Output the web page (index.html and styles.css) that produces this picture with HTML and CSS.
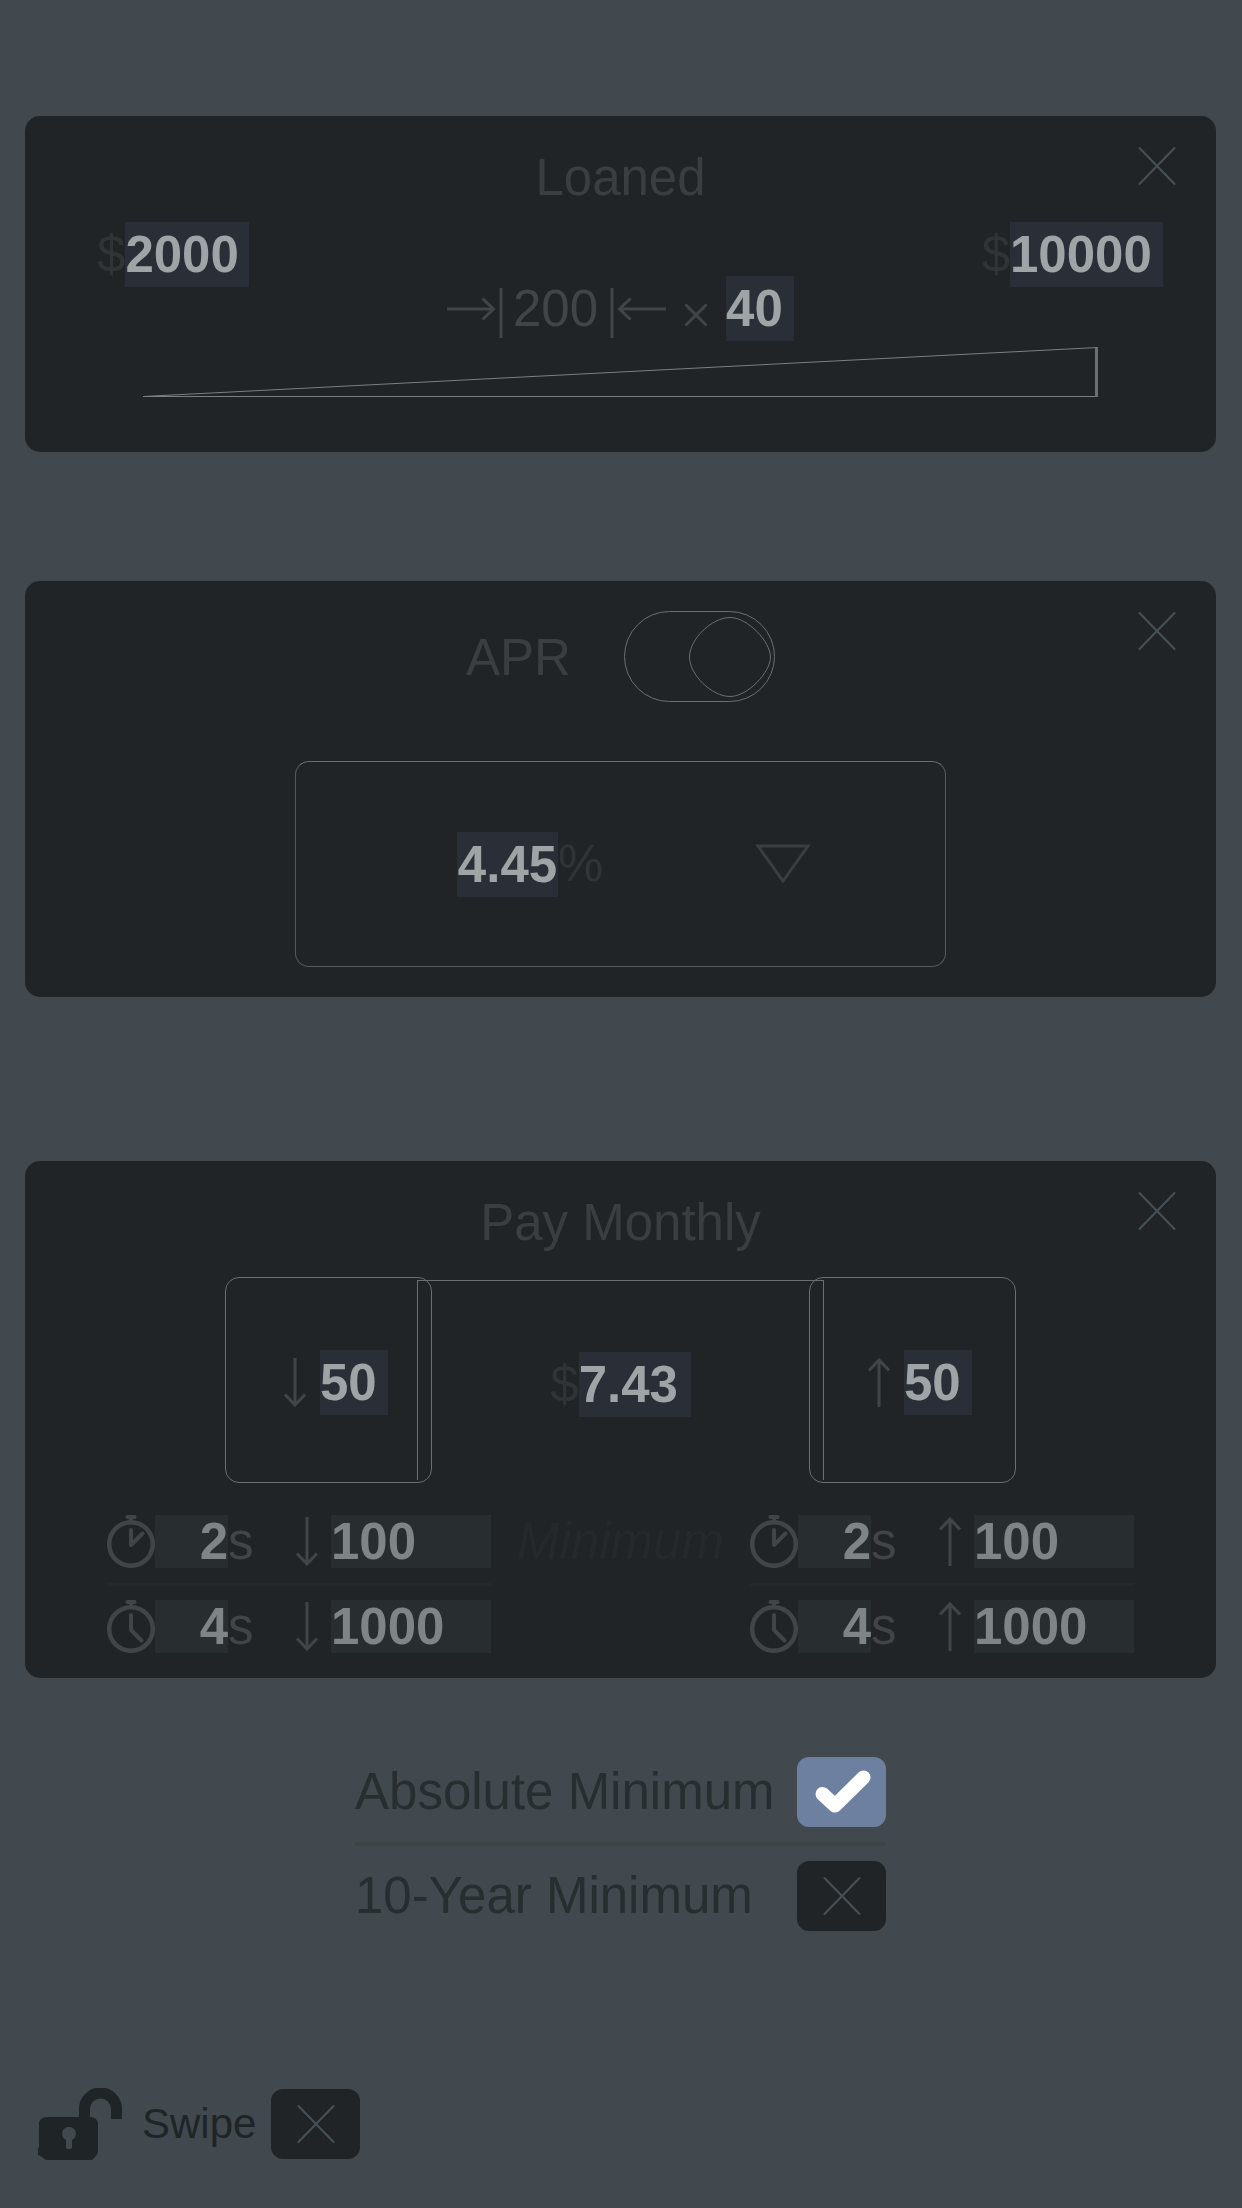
FILE: index.html
```html
<!DOCTYPE html>
<html lang="en">
<head>
<meta charset="utf-8">
<meta name="viewport" content="width=device-width, initial-scale=1">
<title>Loan settings</title>
<link rel="stylesheet" href="styles.css">
</head>
<body>
<svg class="sprite" aria-hidden="true">
  <symbol id="cross" viewBox="0 0 38 40"><path d="M1.500 2L36.500 38M36.500 2L1.500 38"/></symbol>
  <symbol id="down" viewBox="0 0 22 49"><path d="M11 0V47M1 36.500L11 47L21 36.500"/></symbol>
  <symbol id="up" viewBox="0 0 22 49"><path d="M11 49V2M1 12.500L11 2L21 12.500"/></symbol>
  <symbol id="watch" viewBox="0 0 48 53"><circle cx="24" cy="29" r="21.800" stroke-width="4.500"/><path d="M20.500 2H27.500M24 2V7" stroke-width="4"/></symbol>
</svg>
<main class="page">

  <section class="card card-loaned">
    <header class="card-head">
      <h2 class="title">Loaned</h2>
      <button class="close" type="button" aria-label="Remove Loaned"><svg class="icon cross"><use href="#cross"/></svg></button>
    </header>
    <div class="range">
      <label class="field range-min"><span class="unit">$</span><input class="value w-thousands" type="text" value="2000" aria-label="Lowest loan"></label>
      <div class="step">
        <svg class="stop" viewBox="0 0 56 64"><path d="M0 32H46M35.500 21.500L46.500 32L35.500 42.500M54 11V61"/></svg>
        <span class="step-size">200</span>
        <svg class="stop" viewBox="0 0 56 64"><path d="M56 32H10M20.500 21.500L9.500 32L20.500 42.500M2 11V61"/></svg>
        <svg class="times" viewBox="0 0 24 64"><path d="M1.500 27.500L22.500 48.500M22.500 27.500L1.500 48.500"/></svg>
        <input class="value w-tens" type="text" value="40" aria-label="Number of steps">
      </div>
      <label class="field range-max"><span class="unit">$</span><input class="value w-ten-thousands" type="text" value="10000" aria-label="Highest loan"></label>
    </div>
    <svg class="wedge" viewBox="0 0 955 50" preserveAspectRatio="none"><path d="M0 49.500L954.500 .5V49.500Z"/><path class="wedge-edge" d="M953.500 1V50"/></svg>
  </section>

  <section class="card card-apr">
    <header class="card-head">
      <div class="apr-head">
        <label class="title" for="apr">APR</label>
        <span class="switch">
          <input class="switch-input" id="apr" type="checkbox" role="switch" checked>
          <svg class="knob" viewBox="0 0 82 80"><path d="M41 .5C59 .5 81.500 25 81.500 40C81.500 55 59 79.500 41 79.500C23 79.500 .5 58 .5 40C.5 22 23 .5 41 .5Z"/></svg>
        </span>
      </div>
      <button class="close" type="button" aria-label="Remove APR"><svg class="icon cross"><use href="#cross"/></svg></button>
    </header>
    <div class="rate">
      <label class="field"><input class="value w-rate" type="text" value="4.45" aria-label="Rate"><span class="unit">%</span></label>
      <button class="open" type="button" aria-label="Show rates"><svg class="open-icon" viewBox="0 0 56 40"><path d="M3 2H53L28 37Z"/></svg></button>
    </div>
  </section>

  <section class="card card-pay">
    <header class="card-head">
      <h2 class="title">Pay Monthly</h2>
      <button class="close" type="button" aria-label="Remove Pay Monthly"><svg class="icon cross"><use href="#cross"/></svg></button>
    </header>
    <div class="stepper">
      <label class="side"><svg class="icon arrow"><use href="#down"/></svg><input class="value w-tens" type="text" value="50" aria-label="Decrease by"></label>
      <label class="middle"><span class="unit">$</span><input class="value w-payment" type="text" value="7.43" aria-label="Monthly payment"></label>
      <label class="side"><svg class="icon arrow"><use href="#up"/></svg><input class="value w-tens" type="text" value="50" aria-label="Increase by"></label>
    </div>
    <div class="holds">
      <div class="hold-group">
        <div class="hold">
          <svg class="watch" viewBox="0 0 48 53"><use href="#watch"/><path d="M24 15V30L35.500 18.500"/></svg>
          <input class="muted seconds" type="text" value="2" aria-label="First hold, seconds"><span class="sec">s</span>
          <svg class="icon arrow"><use href="#down"/></svg>
          <input class="muted" type="text" value="100" aria-label="Decrease after first hold">
        </div>
        <div class="hold">
          <svg class="watch" viewBox="0 0 48 53"><use href="#watch"/><path d="M24 15V30L34.500 40.500"/></svg>
          <input class="muted seconds" type="text" value="4" aria-label="Second hold, seconds"><span class="sec">s</span>
          <svg class="icon arrow"><use href="#down"/></svg>
          <input class="muted" type="text" value="1000" aria-label="Decrease after second hold">
        </div>
      </div>
      <em class="minimum">Minimum</em>
      <div class="hold-group">
        <div class="hold">
          <svg class="watch" viewBox="0 0 48 53"><use href="#watch"/><path d="M24 15V30L35.500 18.500"/></svg>
          <input class="muted seconds" type="text" value="2" aria-label="First hold, seconds"><span class="sec">s</span>
          <svg class="icon arrow"><use href="#up"/></svg>
          <input class="muted" type="text" value="100" aria-label="Increase after first hold">
        </div>
        <div class="hold">
          <svg class="watch" viewBox="0 0 48 53"><use href="#watch"/><path d="M24 15V30L34.500 40.500"/></svg>
          <input class="muted seconds" type="text" value="4" aria-label="Second hold, seconds"><span class="sec">s</span>
          <svg class="icon arrow"><use href="#up"/></svg>
          <input class="muted" type="text" value="1000" aria-label="Increase after second hold">
        </div>
      </div>
    </div>
  </section>

  <section class="options">
    <label class="option">Absolute Minimum
      <span class="tick">
        <input class="tick-input" type="checkbox" checked>
        <svg class="tick-on" viewBox="0 0 89 70"><path d="M25.500 37L38 48.500L66.500 20.500"/></svg>
        <svg class="icon cross tick-off"><use href="#cross"/></svg>
      </span>
    </label>
    <label class="option">10-Year Minimum
      <span class="tick">
        <input class="tick-input" type="checkbox">
        <svg class="tick-on" viewBox="0 0 89 70"><path d="M25.500 37L38 48.500L66.500 20.500"/></svg>
        <svg class="icon cross tick-off"><use href="#cross"/></svg>
      </span>
    </label>
  </section>

  <footer class="footer">
    <svg class="lock" viewBox="0 0 84 72">
      <path class="shackle" d="M46.500 31V21A16 16 0 0 1 78.500 21V31"/>
      <path class="body" fill-rule="evenodd" d="M9 29H52Q60 29 60 37V63Q60 67 54 72H8Q1 67 0 67V60L1 59V37Q1 29 9 29ZM28 52V59Q28 61 31 61Q34 61 34 59V52A7 7 0 1 0 28 52Z"/>
    </svg>
    <label class="swipe">Swipe
      <span class="tick">
        <input class="tick-input" type="checkbox">
        <svg class="tick-on" viewBox="0 0 89 70"><path d="M25.500 37L38 48.500L66.500 20.500"/></svg>
        <svg class="icon cross tick-off"><use href="#cross"/></svg>
      </span>
    </label>
  </footer>
</main>
</body>
</html>
```
FILE: styles.css
```css
:root {
  --page: #41494e;
  --card: #202426;
  --line: #6b6f73;
  --title: #3a3e40;
  --glyph: #414547;
  --unit: #2f3436;
  --field: #2a2e36;
  --value: #9fa4a7;
}

* { box-sizing: border-box; }

body {
  margin: 0;
  background: var(--page);
  font: 51px/60px "Liberation Sans", Arial, sans-serif;
  color: var(--title);
}

input, button {
  margin: 0;
  padding: 0;
  border: 0;
  border-radius: 0;
  background: none;
  font: inherit;
  color: inherit;
}

svg { display: block; fill: none; }

.sprite { position: absolute; width: 0; height: 0; }

.page {
  display: flex;
  flex-direction: column;
  min-height: 100vh;
  padding: 116px 26px 48px 25px;
}

.card {
  display: flex;
  flex-direction: column;
  padding-top: 30px;
  border-radius: 15px;
  background: var(--card);
}

.card-loaned { padding-bottom: 55px; }
.card-apr { margin-top: 129px; padding-bottom: 30px; }
.card-pay { margin-top: 164px; padding-bottom: 25px; }

.card-head {
  display: grid;
  grid-template-columns: 1fr auto 1fr;
  align-items: start;
  padding: 0 40px;
}

.card-head > :first-child { grid-column: 2; }

.title { margin: 0; padding-top: 2px; font-size: 51px; font-weight: 400; }

.close { justify-self: end; }

.icon { stroke: var(--glyph); stroke-width: 3; }

.cross {
  width: 38px;
  height: 40px;
  stroke: #465157;
  stroke-width: 2;
  stroke-linecap: round;
}

.arrow { width: 22px; height: 49px; }

.field, .middle { display: flex; align-items: center; }

.unit { color: var(--unit); }

.value {
  height: 65px;
  background: var(--field);
  font-weight: 700;
  color: var(--value);
}

.w-tens { width: 68px; }
.w-rate { width: 101px; text-align: center; }
.w-payment { width: 112px; }
.w-thousands { width: 124px; }
.w-ten-thousands { width: 153px; }

/* Loan range */

.range {
  display: grid;
  grid-template-columns: 1fr auto 1fr;
  align-items: start;
  padding: 14px 53px 0;
}

.range-min { margin-left: 19px; }
.range-max { justify-self: end; }

.step { display: flex; align-items: center; padding-top: 54px; color: var(--glyph); }
.stop { width: 56px; height: 64px; stroke: var(--glyph); stroke-width: 3; }
.step-size { margin: 0 12px 0 10px; }
.times { width: 24px; height: 64px; margin: 0 18px; stroke: var(--glyph); stroke-width: 3; }

.wedge {
  align-self: center;
  width: calc(100% - 236px);
  height: 50px;
  margin-top: 6px;
  stroke: #7b7f81;
  stroke-width: 1;
}

.wedge-edge { stroke-width: 3; stroke: #6b6f71; }

/* APR */

.apr-head { display: flex; align-items: center; gap: 53px; }

.switch { display: grid; align-items: center; }
.switch-input, .knob { grid-area: 1 / 1; }

.switch-input {
  appearance: none;
  width: 151px;
  height: 91px;
  border: 1px solid var(--line);
  border-radius: 46px;
}

.knob {
  width: 82px;
  height: 80px;
  margin: 0 4px;
  stroke: var(--line);
  stroke-width: 1;
  pointer-events: none;
}

.switch-input:checked + .knob { justify-self: end; }

.rate {
  display: flex;
  align-items: center;
  justify-content: space-between;
  align-self: center;
  width: 651px;
  max-width: 100%;
  min-height: 206px;
  margin-top: 59px;
  padding: 0 134px 0 161px;
  border: 1px solid #55595d;
  border-top-color: var(--line);
  border-radius: 14px;
}

.open-icon { width: 56px; height: 40px; stroke: var(--title); stroke-width: 3; }

/* Monthly payment */

.stepper {
  display: flex;
  align-self: center;
  width: 791px;
  max-width: 100%;
  margin-top: 24px;
}

.side, .middle {
  display: flex;
  align-items: center;
  align-self: flex-start;
  border: 1px solid var(--line);
}

.side {
  gap: 14px;
  width: 207px;
  height: 206px;
  padding: 4px 0 0 58px;
  border-radius: 14px;
}

.middle {
  flex: 1;
  justify-content: center;
  height: 200px;
  margin: 3px -15px 0;
  padding-top: 8px;
  border-bottom: 0;
}

.holds {
  display: flex;
  align-items: flex-start;
  justify-content: space-between;
  margin-top: 32px;
  padding: 0 82px;
  line-height: 53px;
}

.hold {
  display: grid;
  grid-template-columns: 48px 73px 68px 35px 160px;
  align-items: center;
}

.hold:first-child { padding-bottom: 15px; border-bottom: 3px solid #24282a; }
.hold:last-child { padding-top: 14px; }

.watch {
  width: 48px;
  height: 53px;
  stroke: var(--glyph);
  stroke-width: 4;
  stroke-linecap: round;
  stroke-linejoin: round;
}

.muted {
  width: 100%;
  height: 53px;
  background: #282d30;
  font-weight: 700;
  color: #7f8486;
}

.seconds { text-align: right; }
.sec { color: var(--glyph); }
.minimum { color: #25292b; }

/* Minimum options */

.options {
  align-self: center;
  width: 531px;
  max-width: 100%;
  margin-top: 79px;
  color: #282d2f;
}

.option { display: flex; align-items: center; justify-content: space-between; }
.option:first-child { padding-bottom: 15px; border-bottom: 4px solid #3c4446; }
.option:last-child { padding-top: 15px; }

.tick { display: grid; place-items: center; }
.tick > * { grid-area: 1 / 1; }

.tick-input {
  appearance: none;
  width: 89px;
  height: 70px;
  border-radius: 12px;
  background: var(--card);
}

.tick-input:checked { background: #6d809f; }

.tick-on, .tick-off { pointer-events: none; }

.tick-on {
  display: none;
  width: 89px;
  height: 70px;
  stroke: #fff;
  stroke-width: 14;
  stroke-linecap: round;
  stroke-linejoin: round;
}

.tick-input:checked ~ .tick-on { display: block; }
.tick-input:checked ~ .tick-off { display: none; }

/* Footer */

.footer {
  display: flex;
  align-items: center;
  gap: 20px;
  margin-top: auto;
  padding-left: 13px;
  font-size: 42px;
  color: #1f2426;
}

.lock { width: 84px; height: 72px; }
.shackle { stroke: #1f2426; stroke-width: 11; }
.body { fill: #1f2426; }

.swipe { display: flex; align-items: center; gap: 15px; }
```
